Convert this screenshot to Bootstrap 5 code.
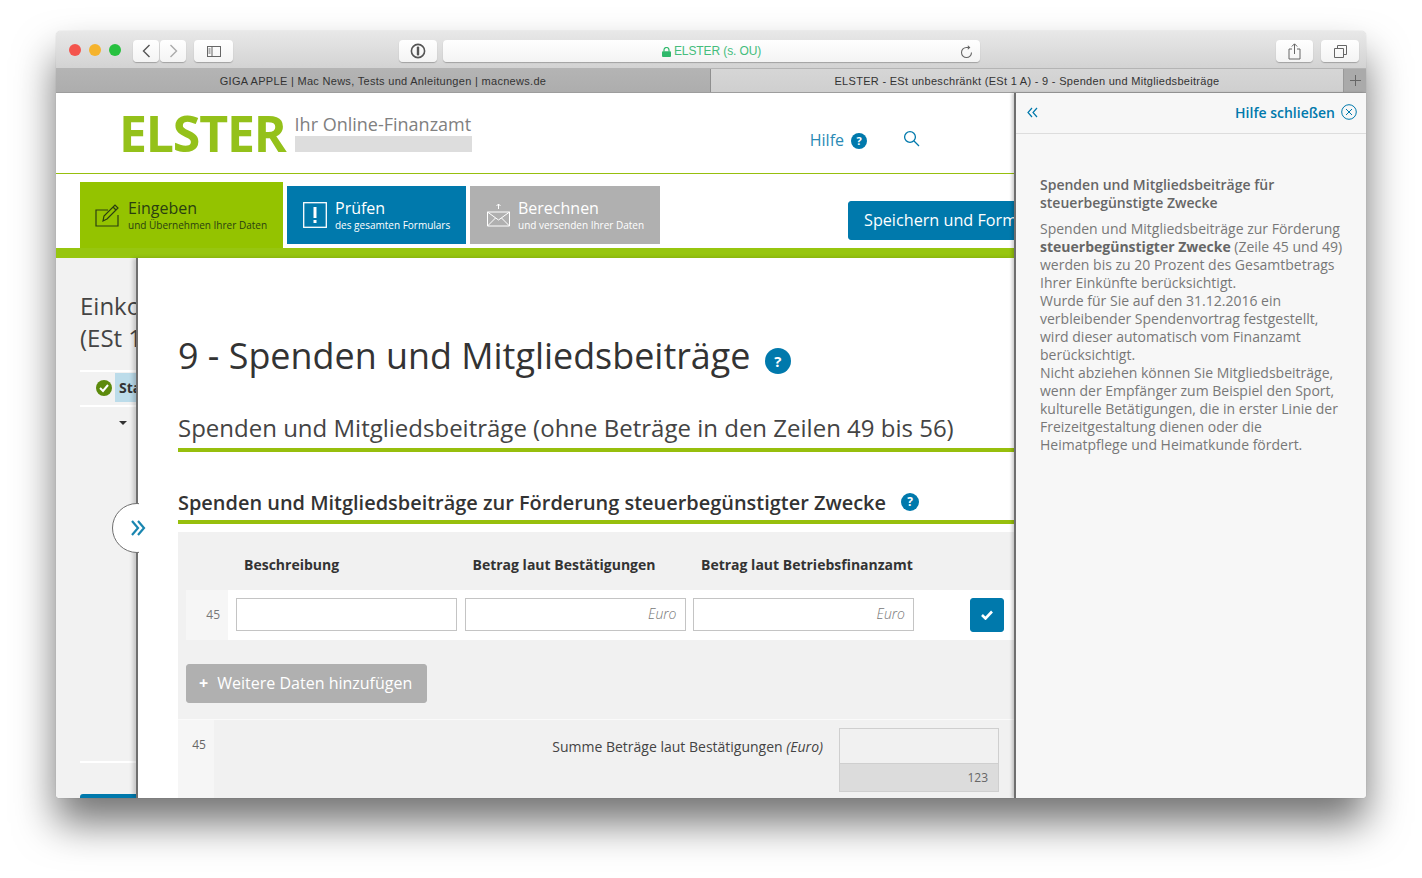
<!DOCTYPE html>
<html lang="de">

<head>
    <meta charset="UTF-8">
    <meta name="viewport" content="width=device-width, initial-scale=1.0">
    <title>ELSTER - Spenden und Mitgliedsbeiträge</title>
    <link href="https://cdn.jsdelivr.net/npm/bootstrap@5.3.0/dist/css/bootstrap.min.css" rel="stylesheet">
    <style>
        body {
            background: #fff;
            font-family: "Open Sans", sans-serif;
            min-height: 878px;
            padding: 31px 56px 0;
        }

        /* Browser window */
        .mac-window {
            width: 1310px;
            height: 767px;
            border-radius: 5px 5px 4px 4px;
            box-shadow: 0 25px 40px rgba(0, 0, 0, .55), 0 0 1px rgba(0, 0, 0, .3);
            overflow: hidden;
        }

        .mac-toolbar {
            height: 38px;
            background: linear-gradient(#e8e8e8, #d3d3d3);
            padding: 9px 7px 7px 13px;
            border-bottom: 1px solid #b4b4b4;
        }

        .dot { width: 12px; height: 12px; border-radius: 50%; }
        .dot-r { background: #f4544d; }
        .dot-y { background: #f5b32c; }
        .dot-g { background: #27c13f; }

        .mac-btn {
            height: 22px;
            background: linear-gradient(#fff, #f4f4f4);
            border-radius: 4px;
            box-shadow: 0 1px 1px rgba(0, 0, 0, .25);
        }

        .mac-addr {
            width: 537px;
            color: #45bd7c;
            font: 12px/23px "Liberation Sans", sans-serif;
            letter-spacing: -.1px;
        }

        .mac-reload { position: absolute; right: 6px; top: 4px; }

        .mac-tabs {
            height: 24px;
            font: 11px/24px "Liberation Sans", sans-serif;
            letter-spacing: .3px;
            color: #333;
            border-bottom: 1px solid #9d9d9d;
        }

        .mac-tab-off { width: 655px; background: linear-gradient(#b4b4b4, #adadad); border-right: 1px solid #8f8f8f; }
        .mac-tab-on { width: 632px; background: linear-gradient(#d6d6d6, #cfcfcf); }
        .mac-tab-new { width: 23px; background: #aaa; border-left: 1px solid #999; }

        /* Page */
        .page-area { height: 705px; }

        .left-part { width: 958px; }

        .top-head {
            height: 81px;
            border-bottom: 1px solid #97bf0d;
            padding-left: 66px;
        }

        .logo-word {
            color: #94c11a;
            font-size: 50px;
            font-weight: 700;
            line-height: 80px;
            letter-spacing: -1.2px;
            margin: 0 9px 0 -3px;
        }

        .logo-sub {
            width: 177px;
            padding-top: 19px;
            color: #808080;
            font-size: 18px;
            line-height: 24px;
            white-space: nowrap;
        }

        .logo-bar { height: 16px; background: #ddd; }

        .head-links { color: #2a8ab5; font-size: 16px; padding: 35px 94px 0 0; }

        .q-round {
            display: inline-flex;
            align-items: center;
            justify-content: center;
            border-radius: 50%;
            background: #0079ac;
            color: #fff;
            font-weight: 700;
        }

        .step-bar { height: 74px; padding-left: 24px; }

        .step-tab {
            color: #fff;
            height: 58px;
            margin-bottom: 4px;
            padding-left: 15px;
            gap: 8px;
            white-space: nowrap;
        }

        .step-tab b { display: block; font-weight: 400; font-size: 16px; line-height: 20px; }
        .step-tab small { display: block; font-size: 10px; line-height: 14px; font-weight: 400; }

        .step-on { background: #94c300; color: #2a3f10; width: 203px; height: 66px; margin-bottom: 0; }
        .step-blue { background: #0079ac; width: 179px; padding-left: 16px; }
        .step-grey { background: #b0b0b0; width: 190px; padding-left: 17px; }

        .save-btn {
            --bs-btn-bg: #0079ac;
            --bs-btn-border-color: #0079ac;
            --bs-btn-color: #fff;
            --bs-btn-border-radius: 3px;
            flex: none;
            width: 200px;
            height: 39px;
            margin: 0 -34px 8px auto;
            padding: 0 0 0 15px;
            font-size: 16.2px;
            text-align: left;
            white-space: nowrap;
        }

        .green-band { height: 10px; background: #97c60f; }

        .lower-row { height: 540px; position: relative; }

        .side-col {
            width: 80px;
            background: #f2f2f2;
            padding-left: 24px;
            overflow: hidden;
            white-space: nowrap;
            flex: none;
        }

        .side-title { color: #444; font-size: 24px; line-height: 32px; padding-top: 32px; margin-bottom: 16px; }

        .side-status {
            height: 37px;
            border-top: 2px solid #fff;
            border-bottom: 2px solid #fff;
            padding: 0 0 2px 16px;
            gap: 3px;
            width: 200px;
        }

        .side-status span {
            background: #bcdcea;
            color: #333;
            font-size: 14px;
            font-weight: 700;
            line-height: 29px;
            padding-left: 4px;
            width: 100px;
        }

        .side-caret {
            width: 0;
            border: 4px solid transparent;
            border-top-color: #333;
            border-bottom: 0;
            margin: 14px 0 336px 39px;
        }

        .side-rule { height: 2px; background: #fff; width: 200px; margin-bottom: 31px; }
        .side-blue { height: 10px; width: 200px; background: #0079ac; border-radius: 3px 3px 0 0; }

        .main-panel {
            width: 878px;
            flex: none;
            background: #fff;
            border-left: 2px solid #6f6f6f;
            box-shadow: -3px 0 4px rgba(0, 0, 0, .18);
            padding-left: 40px;
            overflow: hidden;
        }

        .sheet-h1 { color: #333; font-size: 35.9px; font-weight: 400; line-height: 48px; margin: 74px 0 32px; white-space: nowrap; }
        .sheet-h1 .q-round { width: 26px; height: 26px; font-size: 15px; margin-left: 5px; vertical-align: 2px; }

        .sheet-h2 {
            color: #444;
            font-size: 24px;
            font-weight: 400;
            line-height: 32px;
            margin: 0 0 37px;
            padding-bottom: 4px;
            border-bottom: 4px solid #97bf0d;
            white-space: nowrap;
        }

        .sheet-h3 {
            color: #333;
            font-size: 19.95px;
            font-weight: 600;
            line-height: 28px;
            margin: 0 0 8px;
            padding-bottom: 3px;
            border-bottom: 4px solid #97bf0d;
            white-space: nowrap;
        }

        .sheet-h3 .q-round { width: 18px; height: 18px; font-size: 12px; margin-left: 10px; vertical-align: 4px; }

        .form-box { background: #f1f1f1; height: 266px; }

        .col-heads {
            height: 58px;
            color: #333;
            font-size: 14px;
            font-weight: 700;
            line-height: 66px;
            padding-left: 66px;
        }

        .col-heads div { width: 228.500px; white-space: nowrap; }

        .entry-row { height: 50px; background: #fff; margin-left: 8px; padding-right: 10px; }

        .row-no {
            width: 42px;
            height: 50px;
            background: #f6f6f6;
            color: #777;
            font-size: 12px;
            line-height: 50px;
            text-align: right;
            padding-right: 8px;
            margin-right: 8px;
        }

        .entry-input.form-control {
            width: 221px;
            height: 33px;
            margin: 0 7.500px 1px 0;
            border: 1px solid #c4c4c4;
            border-radius: 0;
            padding: 0 8px 2px;
            font-size: 14px;
            font-style: italic;
            font-weight: 300;
            text-align: right;
        }

        .entry-input.form-control::placeholder { color: #777; opacity: 1; }

        .ok-btn {
            --bs-btn-bg: #0079ac;
            --bs-btn-border-color: #0079ac;
            --bs-btn-border-radius: 3px;
            width: 34px;
            height: 34px;
            padding: 0;
            margin-left: auto;
        }

        .add-btn {
            --bs-btn-bg: #b0b0b0;
            --bs-btn-border-color: #b0b0b0;
            --bs-btn-color: #fff;
            --bs-btn-border-radius: 3px;
            width: 241px;
            height: 39px;
            margin: 24px 0 16px 8px;
            padding: 0 0 2px 12px;
            font-size: 16px;
            text-align: left;
        }

        .add-btn b { margin-right: 5px; }

        .sum-row { border-top: 1px solid #fafafa; height: 79px; }

        .sum-no {
            width: 36px;
            background: #f6f6f6;
            color: #666;
            font-size: 12px;
            line-height: 50px;
            text-align: center;
            padding-left: 6px;
        }

        .sum-label {
            flex: 1;
            color: #444;
            font-size: 14px;
            text-align: right;
            padding: 16px 16px 0 0;
        }

        .sum-field { width: 160px; margin: 8px 15px 0 0; border: 1px solid #cfcfcf; height: 64px; }
        .sum-value { height: 34px; }
        .sum-unit { height: 28px; background: #dcdcdc; border-top: 1px solid #cfcfcf; color: #666; font-size: 12px; line-height: 27px; text-align: right; padding-right: 10px; }

        .toggle-tab {
            position: absolute;
            left: 56px;
            top: 245px;
            width: 50px;
            height: 50px;
            border: 1px solid #6f6f6f;
            border-radius: 50%;
            background: #fff;
            clip-path: inset(0 23px 0 0);
        }

        .toggle-arrows { position: absolute; left: 74px; top: 262px; }

        /* Help */
        .help-panel {
            width: 352px;
            flex: none;
            background: #f7f7f7;
            border-left: 2px solid #6f6f6f;
            box-shadow: -2px 0 3px rgba(0, 0, 0, .2);
            position: relative;
        }

        .help-top {
            height: 41px;
            border-bottom: 1px solid #ddd;
            padding: 0 9px 2px 11px;
            color: #0079ac;
            font-size: 14px;
            font-weight: 600;
        }

        .help-body {
            color: #777;
            font-size: 14px;
            line-height: 18px;
            padding: 42px 20px 0 24px;
        }

        .help-body h5 { color: #666; font-size: 14px; font-weight: 600; line-height: 18px; margin-bottom: 8px; }
        .help-body strong { color: #666; font-weight: 700; }
    </style>
</head>

<body>
    <div class="mac-window d-flex flex-column">
        <!-- Toolbar -->
        <div class="mac-toolbar d-flex align-items-start">
            <div class="d-flex gap-2 pt-1" style="margin-right:12px">
                <div class="dot dot-r"></div>
                <div class="dot dot-y"></div>
                <div class="dot dot-g"></div>
            </div>
            <div class="mac-btn d-flex align-items-center justify-content-center" style="width:26px">
                <svg width="9" height="14" viewBox="0 0 9 14"><path d="M7.500 1 1.500 7l6 6" fill="none" stroke="#555" stroke-width="1.400"/></svg>
            </div>
            <div class="mac-btn d-flex align-items-center justify-content-center" style="width:26px;margin-left:1px">
                <svg width="9" height="14" viewBox="0 0 9 14"><path d="M1.500 1l6 6-6 6" fill="none" stroke="#aaa" stroke-width="1.400"/></svg>
            </div>
            <div class="mac-btn d-flex align-items-center justify-content-center" style="width:39px;margin-left:8px">
                <svg width="14" height="11" viewBox="0 0 14 11"><rect x=".5" y=".5" width="13" height="10" fill="none" stroke="#666"/><path d="M5 .5v10M1.500 3h2M1.500 5h2M1.500 7h2" stroke="#666" fill="none"/></svg>
            </div>
            <div class="mac-btn d-flex align-items-center justify-content-center" style="width:38px;margin-left:166px">
                <svg width="16" height="16" viewBox="0 0 16 16"><circle cx="8" cy="8" r="6.600" fill="none" stroke="#555" stroke-width="1.600"/><rect x="6.800" y="3.600" width="2.400" height="8.800" rx="1" fill="#555"/></svg>
            </div>
            <div class="mac-btn mac-addr position-relative text-center" style="margin-left:6px">
                <svg width="9" height="10" viewBox="0 0 9 10"><path d="M2 4.500V3a2.500 2.500 0 0 1 5 0v1.500" fill="none" stroke="#2fb96b" stroke-width="1.200"/><rect y="4.200" width="9" height="5.800" rx="1" fill="#2fb96b"/></svg>
                ELSTER (s. OU)
                <svg class="mac-reload" width="14" height="15" viewBox="0 0 14 15"><path d="M11.500 8.500a5 5 0 1 1-5-5h2" fill="none" stroke="#666" stroke-width="1.100"/><path d="M7.800 1.200 10.400 3.500 7.800 5.800z" fill="#666"/></svg>
            </div>
            <div class="mac-btn d-flex align-items-center justify-content-center ms-auto" style="width:37px">
                <svg width="13" height="17" viewBox="0 0 13 17"><path d="M4 6H1v10h11V6H9M6.500 11V1M3.800 3.500 6.500.8l2.700 2.700" fill="none" stroke="#666"/></svg>
            </div>
            <div class="mac-btn d-flex align-items-center justify-content-center" style="width:38px;margin-left:8px">
                <svg width="13" height="13" viewBox="0 0 13 13"><path d="M.5 3.500h9v9h-9zM3.500 3.500v-3h9v9h-3" fill="none" stroke="#666"/></svg>
            </div>
        </div>
        <!-- Tabs -->
        <div class="mac-tabs d-flex text-center">
            <div class="mac-tab-off">GIGA APPLE | Mac News, Tests und Anleitungen | macnews.de</div>
            <div class="mac-tab-on">ELSTER - ESt unbeschränkt (ESt 1 A) - 9 - Spenden und Mitgliedsbeiträge</div>
            <div class="mac-tab-new d-flex align-items-center justify-content-center">
                <svg width="11" height="11" viewBox="0 0 11 11"><path d="M5.500 0v11M0 5.500h11" stroke="#666"/></svg>
            </div>
        </div>

        <!-- Page -->
        <div class="page-area d-flex bg-white">
            <div class="left-part flex-shrink-0 overflow-hidden">
                <div class="top-head d-flex">
                    <div class="logo-word">ELSTER</div>
                    <div class="logo-sub">
                        Ihr Online-Finanzamt
                        <div class="logo-bar"></div>
                    </div>
                    <div class="head-links ms-auto d-flex align-items-start">
                        <span>Hilfe</span>
                        <div class="q-round" style="width:16px;height:16px;font-size:11px;margin:5px 0 0 7px">?</div>
                        <svg style="margin:2px 0 0 36px" width="17" height="17" viewBox="0 0 17 17"><circle cx="7" cy="7" r="5.400" fill="none" stroke="#0079ac" stroke-width="1.300"/><path d="m11 11 5 5" stroke="#0079ac" stroke-width="1.300"/></svg>
                    </div>
                </div>
                <div class="step-bar d-flex align-items-end gap-1">
                    <div class="step-tab step-on d-flex align-items-center">
                        <svg width="25" height="24" viewBox="0 0 25 24"><path d="M13 7H1v16h22V12M8 18l1-5L20 2l3 3-11 11zM18 4l3 3" fill="none" stroke="#2a3f10" stroke-width="1.200"/></svg>
                        <div><b>Eingeben</b><small>und Übernehmen Ihrer Daten</small></div>
                    </div>
                    <div class="step-tab step-blue d-flex align-items-center">
                        <svg width="24" height="26" viewBox="0 0 24 26"><rect x=".7" y=".7" width="22.600" height="24.600" fill="none" stroke="#fff" stroke-width="1.300"/><path d="M10.500 5h3v11h-3zM10.500 18h3v3h-3z" fill="#fff"/></svg>
                        <div><b>Prüfen</b><small>des gesamten Formulars</small></div>
                    </div>
                    <div class="step-tab step-grey d-flex align-items-center">
                        <svg width="23" height="24" viewBox="0 0 23 24"><path d="M.5 9h22v14H.5zM.5 9l11 8 11-8M.5 23l8-8M22.500 23l-8-8M11.500 6V1M9.500 3l2-2 2 2" fill="none" stroke="#fff"/></svg>
                        <div><b>Berechnen</b><small>und versenden Ihrer Daten</small></div>
                    </div>
                    <button type="button" class="btn save-btn">Speichern und Formular</button>
                </div>
                <div class="green-band"></div>

                <div class="lower-row d-flex">
                    <div class="side-col">
                        <div class="side-title">Einkommensteuer<br>(ESt 1 A)</div>
                        <div class="side-status d-flex align-items-center">
                            <svg class="flex-shrink-0" width="16" height="16" viewBox="0 0 16 16"><circle cx="8" cy="8" r="8" fill="#5c8a0c"/><path d="m4 8 3 3 5-6" fill="none" stroke="#fff" stroke-width="2"/></svg>
                            <span>Status</span>
                        </div>
                        <div class="side-caret"></div>
                        <div class="side-rule"></div>
                        <div class="side-blue"></div>
                    </div>
                    <div class="main-panel">
                        <h1 class="sheet-h1">9 - Spenden und Mitgliedsbeiträge <span class="q-round">?</span></h1>
                        <h2 class="sheet-h2">Spenden und Mitgliedsbeiträge (ohne Beträge in den Zeilen 49 bis 56)</h2>
                        <h3 class="sheet-h3">Spenden und Mitgliedsbeiträge zur Förderung steuerbegünstigter Zwecke <span class="q-round">?</span></h3>
                        <div class="form-box">
                            <div class="col-heads d-flex">
                                <div>Beschreibung</div>
                                <div>Betrag laut Bestätigungen</div>
                                <div>Betrag laut Betriebsfinanzamt</div>
                            </div>
                            <div class="entry-row d-flex align-items-center">
                                <div class="row-no">45</div>
                                <input type="text" class="form-control entry-input">
                                <input type="text" class="form-control entry-input" placeholder="Euro">
                                <input type="text" class="form-control entry-input" placeholder="Euro">
                                <button type="button" class="btn ok-btn d-flex align-items-center justify-content-center">
                                    <svg width="12" height="10" viewBox="0 0 12 10"><path d="m1 5 3.500 3.500L11 1.500" fill="none" stroke="#fff" stroke-width="2.600"/></svg>
                                </button>
                            </div>
                            <button type="button" class="btn add-btn"><b>+</b> Weitere Daten hinzufügen</button>
                            <div class="sum-row d-flex">
                                <div class="sum-no">45</div>
                                <div class="sum-label">Summe Beträge laut Bestätigungen <em>(Euro)</em></div>
                                <div class="sum-field">
                                    <div class="sum-value"></div>
                                    <div class="sum-unit">123</div>
                                </div>
                            </div>
                        </div>
                    </div>
                    <div class="toggle-tab"></div>
                    <svg class="toggle-arrows" width="16" height="16" viewBox="0 0 16 16"><path d="m2 1 6 7-6 7M8 1l6 7-6 7" fill="none" stroke="#1a86b0" stroke-width="2.200"/></svg>
                </div>
            </div>

            <!-- Help panel -->
            <div class="help-panel">
                <div class="help-top d-flex align-items-center">
                    <svg width="11" height="11" viewBox="0 0 11 11"><path d="M5 1 1 5.500 5 10M10 1 6 5.500 10 10" fill="none" stroke="#0079ac" stroke-width="1.200"/></svg>
                    <span class="ms-auto" style="margin-right:6px">Hilfe schließen</span>
                    <svg width="16" height="16" viewBox="0 0 16 16"><circle cx="8" cy="8" r="7.300" fill="none" stroke="#0079ac"/><path d="m5 5 6 6M11 5l-6 6" stroke="#0079ac"/></svg>
                </div>
                <div class="help-body">
                    <h5>Spenden und Mitgliedsbeiträge für steuerbegünstigte Zwecke</h5>
                    Spenden und Mitgliedsbeiträge zur Förderung <strong>steuerbegünstigter Zwecke</strong> (Zeile 45 und 49) werden bis zu 20 Prozent des Gesamtbetrags Ihrer Einkünfte berücksichtigt.<br>
                    Wurde für Sie auf den 31.12.2016 ein verbleibender Spendenvortrag festgestellt, wird dieser automatisch vom Finanzamt berücksichtigt.<br>
                    Nicht abziehen können Sie Mitgliedsbeiträge, wenn der Empfänger zum Beispiel den Sport, kulturelle Betätigungen, die in erster Linie der Freizeitgestaltung dienen oder die Heimatpflege und Heimatkunde fördert.
                </div>
            </div>
        </div>
    </div>

    <script src="https://cdn.jsdelivr.net/npm/bootstrap@5.3.0/dist/js/bootstrap.bundle.min.js"></script>
</body>

</html>
